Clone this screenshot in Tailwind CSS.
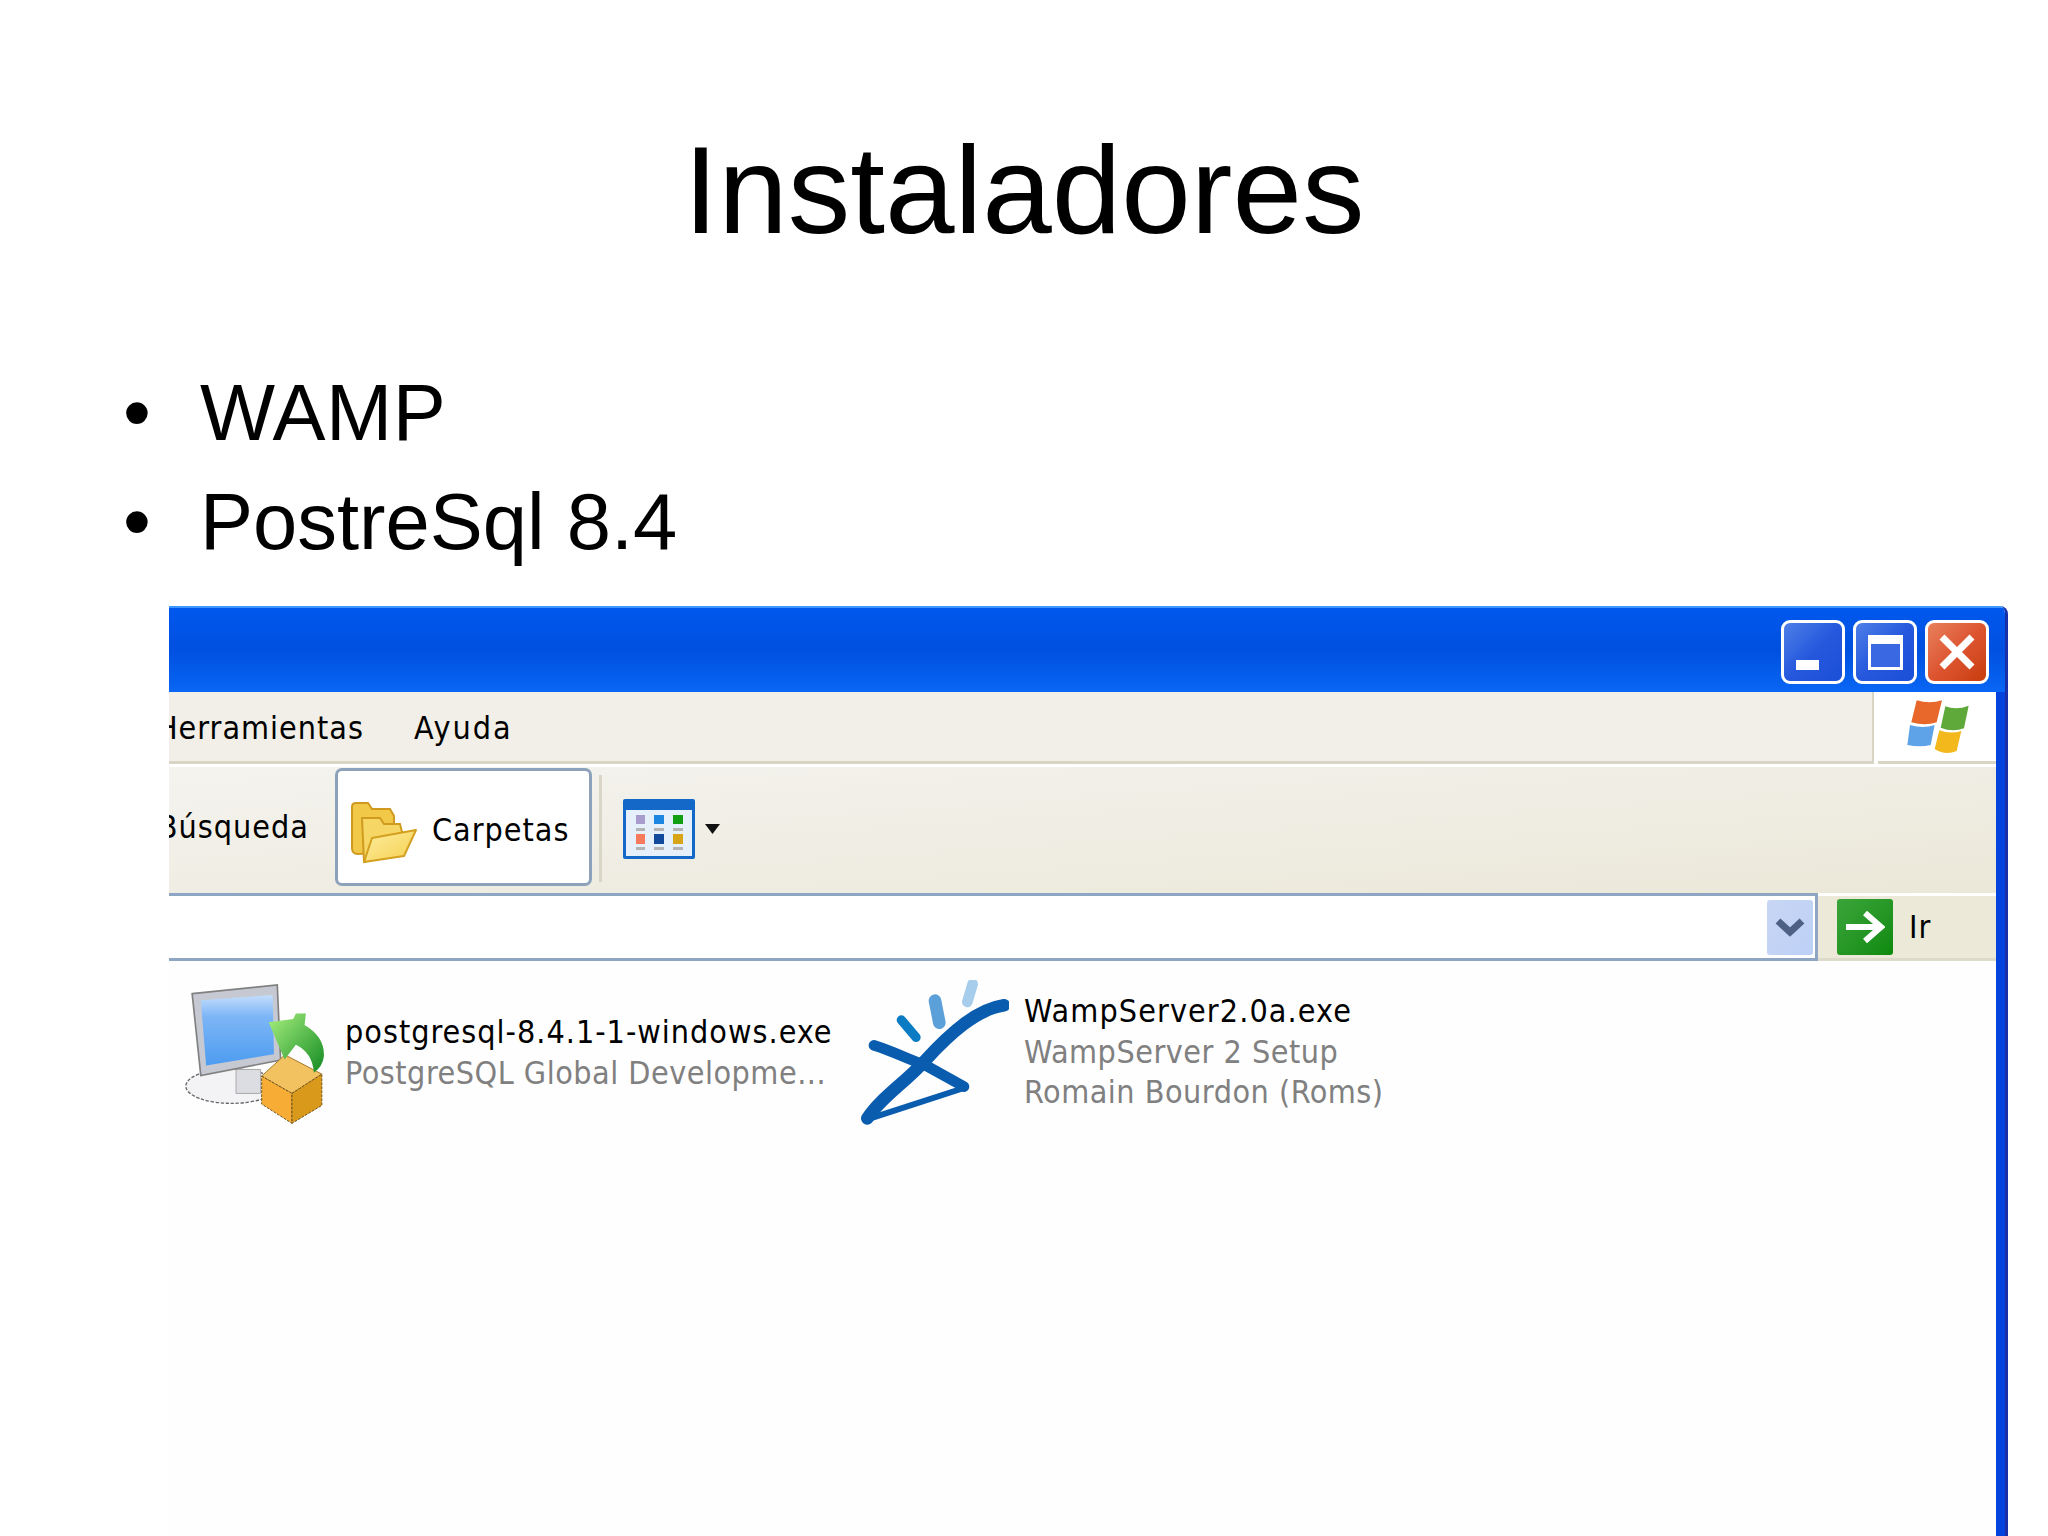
<!DOCTYPE html>
<html lang="es">
<head>
  <meta charset="UTF-8">
  <title>Instaladores</title>
  <script src="https://cdn.jsdelivr.net/npm/@tailwindcss/browser@4"></script>
</head>
<body class="bg-white">
  <div class="w-[2048px] h-[1536px] flex flex-col overflow-hidden font-['Liberation_Sans',sans-serif] text-black">
    <!-- Titulo -->
    <h1 class="mt-[127px] text-[125px] leading-none text-center">Instaladores</h1>

    <!-- Lista -->
    <ul class="mt-[107px] pl-[123px] text-[79.5px] leading-[108.5px]">
      <li class="flex"><span class="w-[77px]">•</span><span class="tracking-[0.5px]">WAMP</span></li>
      <li class="flex"><span class="w-[77px]">•</span><span>PostreSql 8.4</span></li>
    </ul>

    <!-- Ventana -->
    <div class="mt-[30px] ml-[169px] w-[1839px] flex-1 flex flex-col overflow-hidden rounded-tr-[8px] border-r-[3px] border-[#1a30a8] font-['DejaVu_Sans_Condensed','DejaVu_Sans',sans-serif] text-[32px] leading-[40.5px] tracking-[1px]">
      <!-- Barra de titulo -->
      <div class="h-[86px] shrink-0 pt-[4px] pr-[16px] flex items-center justify-end gap-2 border-t-2 border-[#3f96ff] bg-linear-to-b from-[#0058ee] via-[#0050e0] to-[#0a66f4]">
        <div class="w-[64px] h-[64px] relative rounded-[9px] border-[3px] border-white bg-linear-to-br from-[#4f7fe8] via-[#2558dc] to-[#1c4fd8]">
          <div class="absolute left-[12px] top-[37px] w-[23px] h-[10px] bg-white"></div>
        </div>
        <div class="w-[64px] h-[64px] relative rounded-[9px] border-[3px] border-white bg-linear-to-br from-[#4f7fe8] via-[#2558dc] to-[#1c4fd8]">
          <div class="absolute left-[12px] top-[12px] w-[35px] h-[35px] border-[3px] border-t-[9px] border-white bg-[#3a68e2]"></div>
        </div>
        <div class="w-[64px] h-[64px] relative rounded-[9px] border-[3px] border-white bg-linear-to-br from-[#e8805c] via-[#dd5530] to-[#c83c08]">
          <svg class="absolute left-[11px] top-[11px]" width="36" height="36" viewBox="0 0 36 36"><path d="M3 3L33 33M33 3L3 33" stroke="#fff" stroke-width="7"/></svg>
        </div>
      </div>

      <div class="flex-1 flex flex-col border-r-[9px] border-[#0544dc]">
        <!-- Menu -->
        <div class="h-[72px] shrink-0 flex">
          <div class="flex-1 flex items-start pt-[16px] bg-[#f1efe7] border-r-2 border-b-[3px] border-[#d8d5c4]">
            <div class="w-[195px] flex justify-end overflow-hidden whitespace-nowrap">Herramientas</div>
            <div class="ml-[50px] tracking-[2px]">Ayuda</div>
          </div>
          <div class="w-[122px] pl-[4px] bg-white">
            <div class="h-full border-b-[3px] border-[#d8d5c4]">
              <svg width="118" height="69" viewBox="4 -15 354 207">
                <path d="M120 10 Q160 22 196 10 L180 76 Q145 88 104 76Z" fill="#e8682c"/>
                <path d="M206 28 Q240 40 276 26 L262 94 Q228 106 192 92Z" fill="#5fa83a"/>
                <path d="M100 84 Q140 96 174 84 L162 144 Q130 152 92 144Z" fill="#5ea3e8"/>
                <path d="M188 100 Q220 112 254 102 L240 162 Q205 176 174 156Z" fill="#f2b81c"/>
              </svg>
            </div>
          </div>
        </div>

        <!-- Barra de herramientas -->
        <div class="h-[129px] shrink-0 flex items-start border-t-[3px] border-white bg-linear-to-br from-[#f4f3ee] to-[#ebe8d9]">
          <div class="w-[140px] mt-[40px] flex justify-end overflow-hidden whitespace-nowrap">Búsqueda</div>
          <div class="ml-[26px] mt-px w-[257px] h-[118px] flex items-center rounded-[7px] border-[3px] border-[#8ba2ba] bg-white">
            <svg class="ml-[12px] mt-[12px]" width="68" height="63" viewBox="0 0 68 63">
              <defs>
                <linearGradient id="carpeta" x1="0" y1="0" x2="1" y2="1"><stop offset="0" stop-color="#fdeea0"/><stop offset="1" stop-color="#f6cf50"/></linearGradient>
              </defs>
              <path d="M2 5Q2 1 6 1H18L22 7H40L44 14V50L8 52Q2 52 2 46Z" fill="#f2c848" stroke="#d09a20" stroke-width="2"/>
              <path d="M12 16H30L34 22H50L52 30V50L14 60Z" fill="#f6d664" stroke="#cf9c20" stroke-width="2"/>
              <path d="M14 60L22 36L66 28L54 54Z" fill="url(#carpeta)" stroke="#d3a020" stroke-width="2" stroke-linejoin="round"/>
            </svg>
            <span class="ml-[14px] mt-[7px]">Carpetas</span>
          </div>
          <div class="ml-[7px] mt-[8px] w-[3px] h-[107px] bg-[#d9d6c8]"></div>
          <svg class="ml-[21px] mt-[32px]" width="72" height="60" viewBox="0 0 72 60">
            <rect width="72" height="60" rx="2" fill="#1468c8"/>
            <rect x="3" y="11" width="66" height="46" fill="#e6f0fb"/>
            <path d="M13 16h9v9h-9z" fill="#a79ccc"/><path d="M31 16h10v9h-10z" fill="#1c86e0"/><path d="M50 16h10v9h-10z" fill="#12a012"/>
            <path d="M13 29h9v3h-9zM31 29h10v3h-10zM50 29h10v3h-10zM13 48h9v3h-9zM31 48h10v3h-10zM50 48h10v3h-10z" fill="#b4b4b4"/>
            <path d="M13 35h9v10h-9z" fill="#f77a5c"/><path d="M31 35h10v10h-10z" fill="#124a9c"/><path d="M50 35h10v10h-10z" fill="#d8a418"/>
          </svg>
          <svg class="ml-[10px] mt-[57px]" width="15" height="10" viewBox="0 0 15 10"><path d="M0 0H15L7.5 10Z" fill="#111"/></svg>
        </div>

        <!-- Direccion -->
        <div class="h-[68px] shrink-0 flex">
          <div class="flex-1 flex items-center justify-end pr-[2px] bg-white border-y-[3px] border-r-[3px] border-[#8ea6c4]">
            <div class="w-[46px] h-[55px] flex items-center justify-center rounded-[3px] bg-linear-to-br from-[#c9d6f4] to-[#bcd0f6]">
              <svg width="30" height="20" viewBox="0 0 30 20"><path d="M3 4L15 15L27 4" fill="none" stroke="#4d6185" stroke-width="7"/></svg>
            </div>
          </div>
          <div class="w-[178px] flex items-center bg-[#ece9d8] border-t-[3px] border-white border-b-[3px] border-b-[#dcdac9]">
            <div class="ml-[19px] w-[56px] h-[56px] flex items-center justify-center rounded-[3px] bg-linear-to-br from-[#3aa53a] to-[#0b8a0b]">
              <svg width="40" height="34" viewBox="0 0 40 34"><path d="M1 17H36M20 3L36 17L20 31" fill="none" stroke="#fff" stroke-width="6"/></svg>
            </div>
            <span class="ml-[16px]">Ir</span>
          </div>
        </div>

        <!-- Archivos -->
        <div class="flex-1 flex items-start pl-[16px] bg-[#fefefe]">
          <div class="w-[675px] mt-[22px] flex items-start">
            <svg width="140" height="143" viewBox="45 40 420 430">
              <defs>
                <linearGradient id="pantalla" x1="0" y1="0" x2="0" y2="1"><stop offset="0" stop-color="#c4defc"/><stop offset="0.3" stop-color="#7db6f6"/><stop offset="1" stop-color="#4d9cf0"/></linearGradient>
                <linearGradient id="flecha" x1="0" y1="0" x2="1" y2="1"><stop offset="0" stop-color="#a8f07e"/><stop offset="1" stop-color="#128a22"/></linearGradient>
              </defs>
              <ellipse cx="185" cy="350" rx="138" ry="52" fill="#f3f3f6" stroke="#666" stroke-width="4" stroke-dasharray="10 5"/>
              <path d="M198 300H272V372H198Z" fill="#dcdde3" stroke="#aaa" stroke-width="3"/>
              <path d="M66 72L322 46L332 272L92 318Z" fill="#c6c8d2" stroke="#808080" stroke-width="5"/>
              <path d="M92 92L308 76L312 254L108 288Z" fill="url(#pantalla)"/>
              <path d="M275 320L345 256L456 314L366 372Z" fill="#f3c260" stroke="#a47a30" stroke-width="3"/>
              <path d="M275 320L366 372V462L275 404Z" fill="#f7ad35" stroke="#6b5220" stroke-width="3" stroke-dasharray="8 4"/>
              <path d="M366 372L456 314V408L366 462Z" fill="#d99a1c" stroke="#6b5220" stroke-width="3" stroke-dasharray="8 4"/>
              <path d="M296 158L370 148L378 132H408L404 166Q466 202 462 262Q458 292 432 310Q428 250 378 226L344 270Z" fill="url(#flecha)"/>
            </svg>
            <div class="ml-[20px] mt-[29px] whitespace-nowrap">
              <div>postgresql-8.4.1-1-windows.exe</div>
              <div class="text-[#808080] tracking-[0.5px]">PostgreSQL Global Developme...</div>
            </div>
          </div>
          <div class="mt-[19px] flex items-start">
            <svg width="149" height="149" viewBox="30 30 447 447" fill="none" stroke-linecap="round" stroke-linejoin="round">
              <path d="M462 106C380 118 300 190 225 272C165 338 90 385 52 445" stroke="#0a5cae" stroke-width="38"/>
              <path d="M72 226C120 240 180 270 225 285L342 350" stroke="#0a5cae" stroke-width="32"/>
              <path d="M52 448L342 354" stroke="#0a5cae" stroke-width="18"/>
              <path d="M154 150L198 202" stroke="#0b7cc4" stroke-width="28"/>
              <path d="M255 92L268 158" stroke="#5ba0d8" stroke-width="38"/>
              <path d="M368 42L352 96" stroke="#a6cdec" stroke-width="32"/>
            </svg>
            <div class="ml-[15px] mt-[11px] whitespace-nowrap tracking-[0.5px]">
              <div class="tracking-[1.1px]">WampServer2.0a.exe</div>
              <div class="text-[#808080]">WampServer 2 Setup</div>
              <div class="text-[#808080]">Romain Bourdon (Roms)</div>
            </div>
          </div>
        </div>
      </div>
    </div>
  </div>
</body>
</html>
